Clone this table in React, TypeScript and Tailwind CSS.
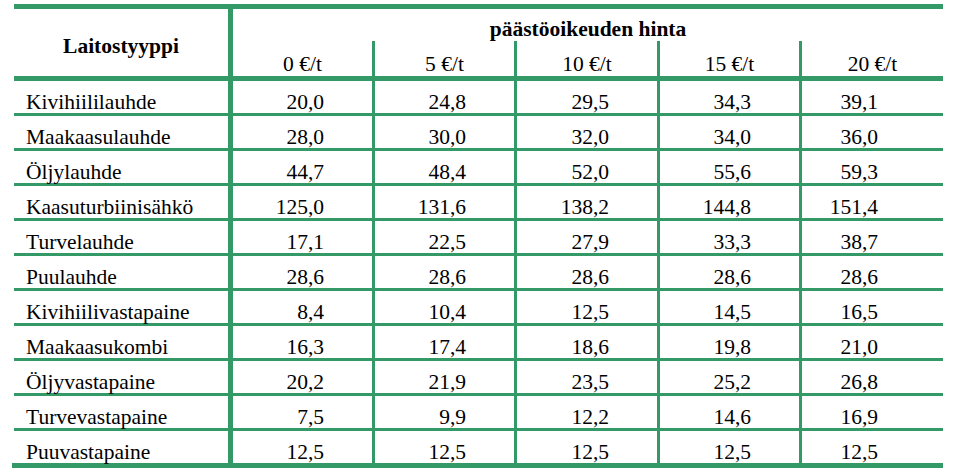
const prices = ["0 €/t", "5 €/t", "10 €/t", "15 €/t", "20 €/t"]

const rows: [string, string[]][] = [
  ["Kivihiililauhde", ["20,0", "24,8", "29,5", "34,3", "39,1"]],
  ["Maakaasulauhde", ["28,0", "30,0", "32,0", "34,0", "36,0"]],
  ["Öljylauhde", ["44,7", "48,4", "52,0", "55,6", "59,3"]],
  ["Kaasuturbiinisähkö", ["125,0", "131,6", "138,2", "144,8", "151,4"]],
  ["Turvelauhde", ["17,1", "22,5", "27,9", "33,3", "38,7"]],
  ["Puulauhde", ["28,6", "28,6", "28,6", "28,6", "28,6"]],
  ["Kivihiilivastapaine", ["8,4", "10,4", "12,5", "14,5", "16,5"]],
  ["Maakaasukombi", ["16,3", "17,4", "18,6", "19,8", "21,0"]],
  ["Öljyvastapaine", ["20,2", "21,9", "23,5", "25,2", "26,8"]],
  ["Turvevastapaine", ["7,5", "9,9", "12,2", "14,6", "16,9"]],
  ["Puuvastapaine", ["12,5", "12,5", "12,5", "12,5", "12,5"]],
]

const serif = "font-['Liberation_Serif','Times_New_Roman',serif] text-[21.5px] leading-[24px] text-black"

// widths of the five price columns, thin 3px rules between them
const colW = ["w-[139px]", "w-[139px]", "w-[140px]", "w-[139px]", "w-[141px]"]
const padR = ["pr-[48px]", "pr-[48px]", "pr-[48px]", "pr-[48px]", "pr-[65px]"]

function Rule() {
  return <div className="w-[3px] self-stretch bg-[#339966]" />
}

function DataRow({ name, values }: { name: string; values: string[] }) {
  return (
    <div className="flex h-[32px]">
      <div className={`${serif} w-[214px] pl-[12px] pt-[9px] whitespace-nowrap`}>{name}</div>
      <div className="w-[5px] bg-[#339966]" />
      {values.map((v, i) => (
        <div key={i} className="flex">
          {i > 0 && <Rule />}
          <div className={`${serif} ${colW[i]} ${padR[i]} pt-[9px] text-right`}>{v}</div>
        </div>
      ))}
    </div>
  )
}

export default function App() {
  return (
    <div className="min-h-screen bg-white pt-[4px]">
      <div className="ml-[14px] w-[929px]">
        <div className="h-[5px] bg-[#339966]" />

        <div className="flex h-[67px]">
          <div className={`${serif} w-[214px] pt-[25px] text-center font-bold`}>Laitostyyppi</div>
          <div className="w-[5px] bg-[#339966]" />
          <div className="flex w-[710px] flex-col">
            <div className={`${serif} h-[32px] pt-[8px] text-center font-bold`}>päästöoikeuden hinta</div>
            <div className="flex h-[35px]">
              {prices.map((p, i) => (
                <div key={p} className="flex">
                  {i > 0 && <Rule />}
                  <div className={`${serif} ${colW[i]} pt-[11px] text-center`}>{p}</div>
                </div>
              ))}
            </div>
          </div>
        </div>

        <div className="h-[5px] bg-[#339966]" />

        {rows.map(([name, values], i) => (
          <div key={name}>
            {i > 0 && <div className="h-[3px] bg-[#339966]" />}
            <DataRow name={name} values={values} />
          </div>
        ))}

        <div className="-ml-[2px] h-[5px] w-[931px] bg-[#339966]" />
      </div>
    </div>
  )
}
